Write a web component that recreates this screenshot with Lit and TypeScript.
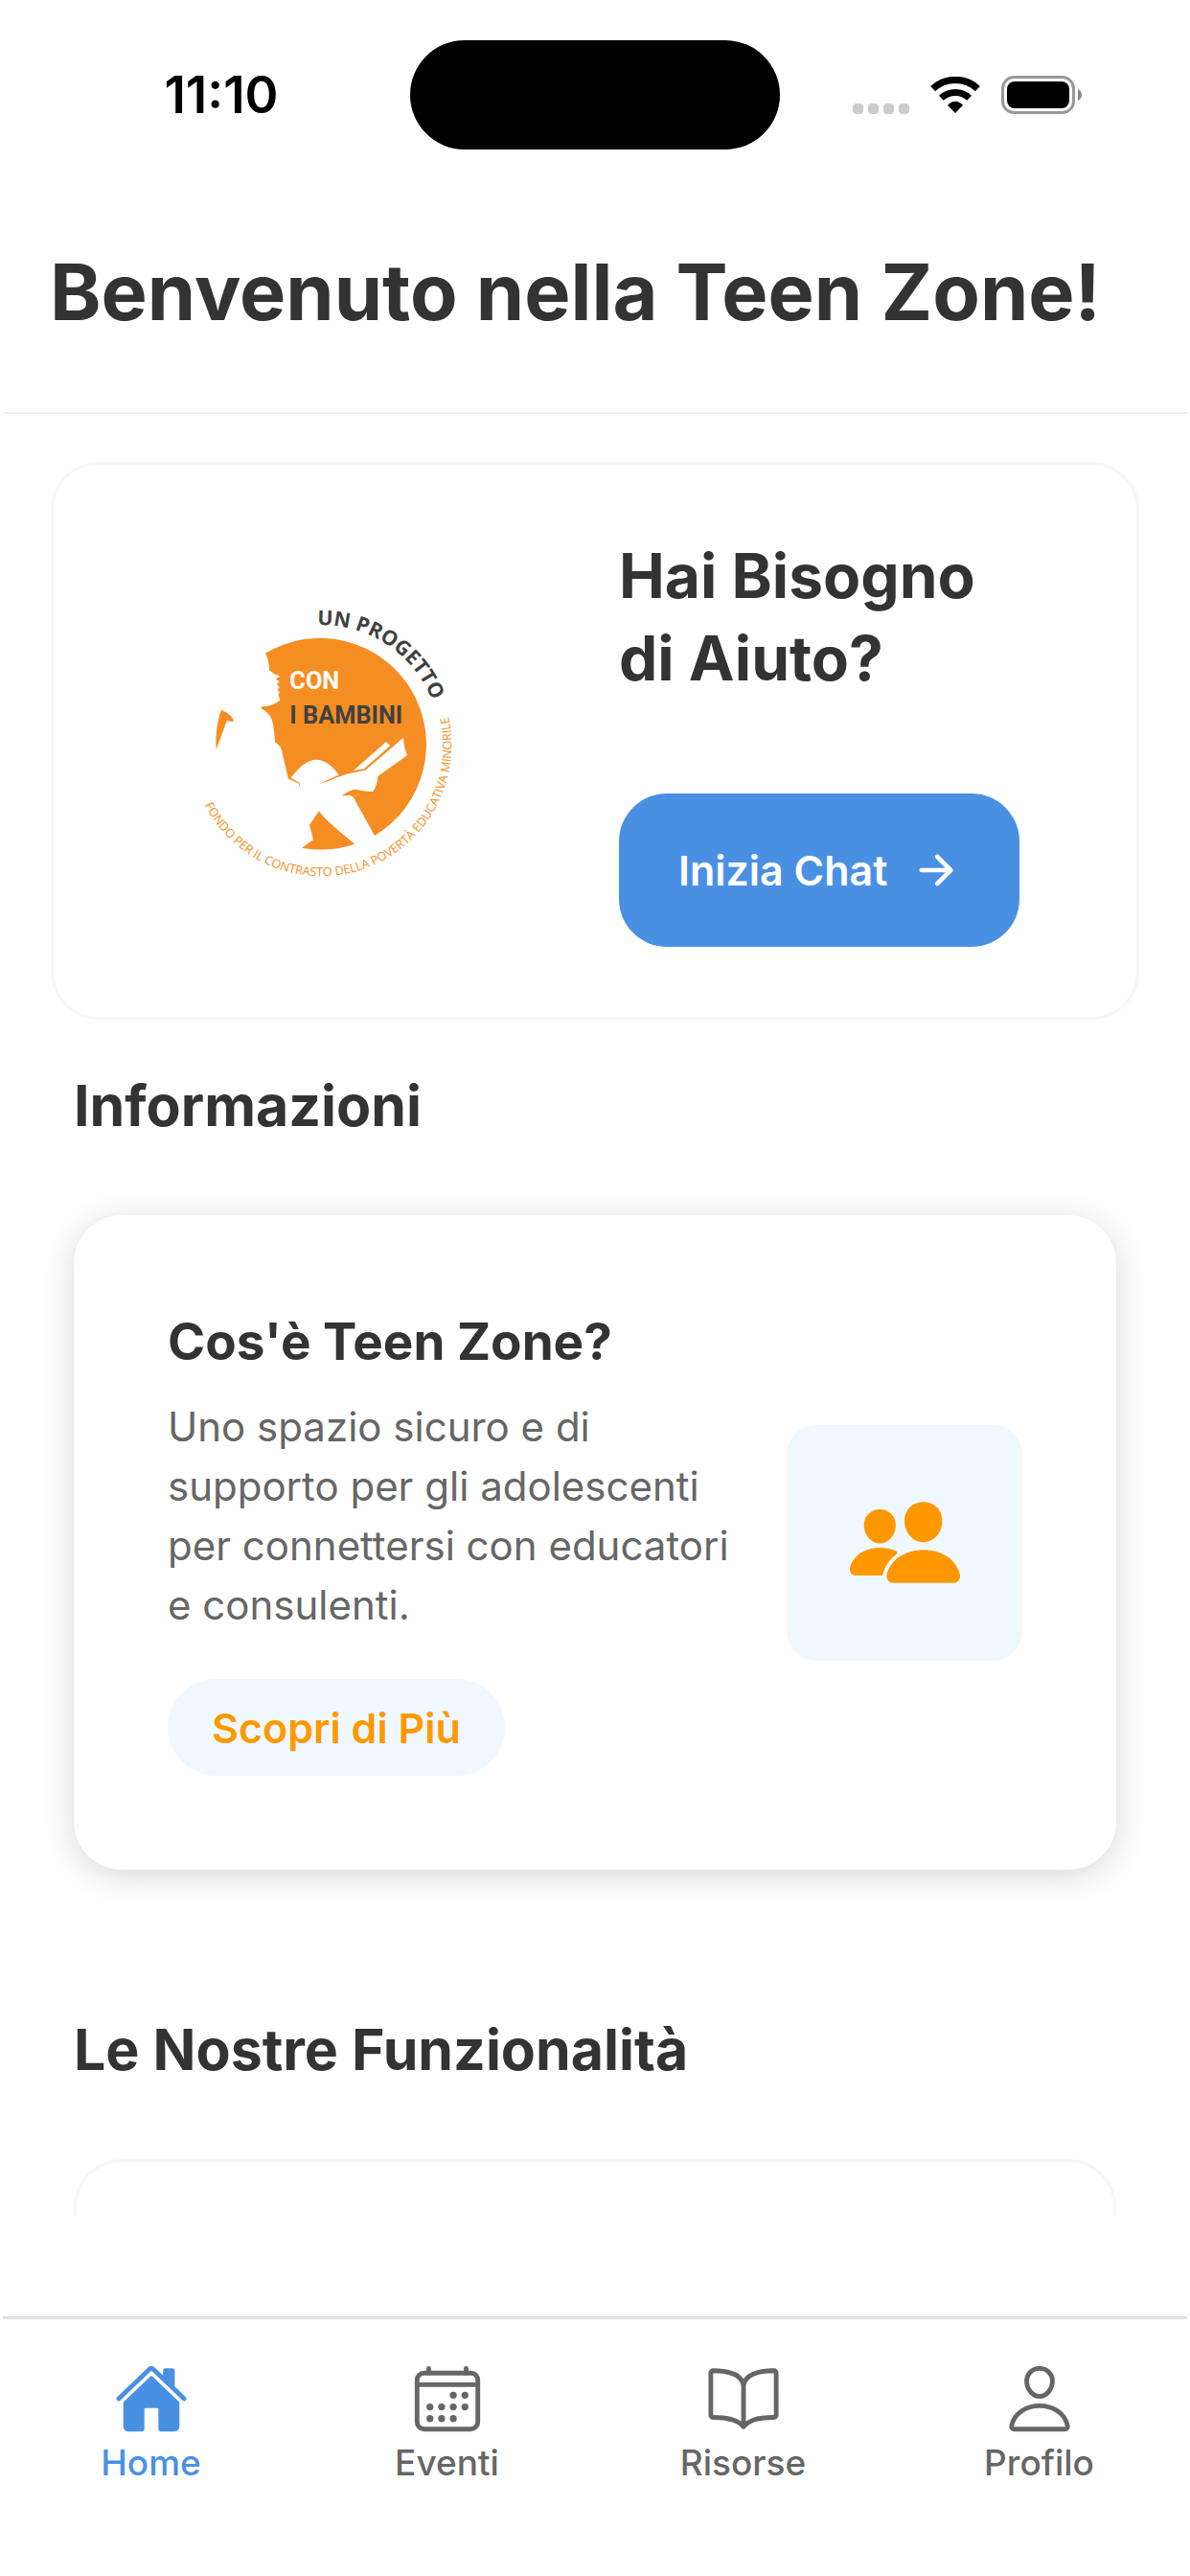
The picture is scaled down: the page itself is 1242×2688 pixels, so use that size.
import { LitElement, html, css, svg } from "lit";
import { customElement, property, state } from "lit/decorators.js";

type IconName = "home" | "calendar" | "book" | "person" | "people" | "arrow";

const icons = {
  home: svg`
    <path d="M261.56 101.28a8 8 0 00-11.06 0L66.4 277.15a8 8 0 00-2.47 5.79L63.9 448a32 32 0 0032 32H192a16 16 0 0016-16V328a8 8 0 018-8h80a8 8 0 018 8v136a16 16 0 0016 16h96.06a32 32 0 0032-32V282.94a8 8 0 00-2.47-5.79z"/>
    <path d="M490.91 244.15l-74.8-71.56V64a16 16 0 00-16-16h-48a16 16 0 00-16 16v32l-57.92-55.38C272.77 35.14 264.71 32 256 32c-8.68 0-16.72 3.14-22.14 8.63L21.16 244.13c-6.22 6-7 15.87-1.34 22.37A16 16 0 0043 267.56L250.5 69.28a8 8 0 0111.06 0l207.52 198.28a16 16 0 0022.59-.44c6.14-6.36 5.63-16.86-.76-22.97z"/>`,
  calendar: svg`
    <g fill="none" stroke="currentColor" stroke-width="32" stroke-linejoin="round">
      <rect x="48" y="80" width="416" height="384" rx="48"/>
      <path stroke-linecap="round" d="M128 48v32M384 48v32"/>
      <path d="M464 160H48"/>
    </g>
    <circle cx="296" cy="232" r="24"/><circle cx="376" cy="232" r="24"/>
    <circle cx="136" cy="312" r="24"/><circle cx="216" cy="312" r="24"/>
    <circle cx="296" cy="312" r="24"/><circle cx="376" cy="312" r="24"/>
    <circle cx="136" cy="392" r="24"/><circle cx="216" cy="392" r="24"/>
    <circle cx="296" cy="392" r="24"/>`,
  book: svg`
    <path fill="none" stroke="currentColor" stroke-width="32" stroke-linecap="round" stroke-linejoin="round"
      d="M256 160c16-63.16 76.43-95.41 208-96a15.94 15.94 0 0116 16v288a16 16 0 01-16 16c-128 0-177.45 25.81-208 64-30.37-38-80-64-208-64-9.88 0-16-8.05-16-17.93V80a15.94 15.94 0 0116-16c131.57.59 192 32.84 208 96zM256 160v288"/>`,
  person: svg`
    <path fill="none" stroke="currentColor" stroke-width="32" stroke-linecap="round" stroke-linejoin="round"
      d="M344 144c-3.92 52.87-44 96-88 96s-84.15-43.12-88-96c-4-55 35-96 88-96s92 42 88 96zM256 304c-87 0-175.3 48-191.64 138.6C62.39 453.52 68.57 464 80 464h352c11.44 0 17.62-10.48 15.65-21.4C431.3 352 343 304 256 304z"/>`,
  people: svg`
    <path d="M336 256c-20.56 0-40.44-9.18-56-25.84-15.13-16.25-24.37-37.92-26-61-1.74-24.62 5.77-47.26 21.14-63.76S312 80 336 80c23.83 0 45.38 9.06 60.7 25.52 15.47 16.62 23 39.22 21.26 63.63-1.67 23.11-10.9 44.77-26 61C376.44 246.82 356.57 256 336 256zM467.83 432H204.18a27.71 27.71 0 01-22-10.67 30.22 30.22 0 01-5.26-25.79c8.42-33.81 29.28-61.85 60.32-81.08C264.79 297.4 299.86 288 336 288c36.85 0 71 9 98.71 26.05 31.11 19.13 52 47.33 60.38 81.55a30.27 30.27 0 01-5.32 25.78A27.68 27.68 0 01467.83 432zM147 260c-35.19 0-66.13-32.72-69-72.93-1.42-20.6 5-39.65 18-53.62 12.86-13.83 31-21.45 51-21.45s38 7.66 50.93 21.57c13.1 14.08 19.5 33.09 18 53.52-2.87 40.2-33.8 72.91-68.93 72.91zM212.66 291.45c-17.59-8.6-40.42-12.9-65.65-12.9-29.46 0-58.07 7.68-80.57 21.62-25.51 15.83-42.67 38.88-49.6 66.71a27.39 27.39 0 004.79 23.36A25.32 25.32 0 0041.72 400h111a8 8 0 007.87-6.57c.11-.63.25-1.26.41-1.88 8.48-34.06 28.35-62.84 57.71-83.82a8 8 0 00-.63-13.39c-1.57-.92-3.37-1.89-5.42-2.89z"/>`,
  arrow: svg`
    <path fill="none" stroke="currentColor" stroke-width="48" stroke-linecap="round" stroke-linejoin="round"
      d="M268 112l144 144-144 144M392 256H100"/>`,
};

@customElement("app-icon")
export class AppIcon extends LitElement {
  @property() name: IconName = "home";

  static styles = css`
    :host {
      display: block;
    }
    .icon {
      display: block;
      width: 100%;
      height: 100%;
      fill: currentColor;
    }
  `;

  render() {
    return html`<svg class="icon" viewBox="0 0 512 512" aria-hidden="true">${icons[this.name]}</svg>`;
  }
}

@customElement("status-bar")
export class StatusBar extends LitElement {
  static styles = css`
    :host {
      display: grid;
      grid-template-columns: 1fr 386px 1fr;
      align-items: center;
      padding-top: 42px;
      color: #000;
    }
    .time {
      padding-left: 34px;
      text-align: center;
      font-size: 53px;
      line-height: 60px;
      font-weight: 600;
    }
    .island {
      height: 114px;
      border-radius: 57px;
      background: #000;
    }
    .signals {
      display: flex;
      align-items: center;
      gap: 22px;
      padding-left: 76px;
    }
    .dots {
      display: flex;
      align-self: flex-end;
      gap: 5px;
    }
    .dot {
      width: 11px;
      height: 11px;
      border-radius: 4px;
      background: #ccc;
    }
    .wifi {
      width: 52px;
      height: 38px;
    }
    .battery {
      width: 84px;
      height: 40px;
    }
  `;

  render() {
    return html`
      <div class="time">11:10</div>
      <div class="island"></div>
      <div class="signals">
        <div class="dots">
          <span class="dot"></span><span class="dot"></span><span class="dot"></span><span class="dot"></span>
        </div>
        <svg class="wifi" viewBox="0 0 156 114" aria-label="Wi-Fi">
          <path fill="none" stroke="#000" stroke-width="22" d="M8 38A102 102 0 0 1 148 38"/>
          <path fill="none" stroke="#000" stroke-width="21" d="M34 67A64 64 0 0 1 122 67"/>
          <path d="M78 114L54 89Q78 66 102 89Z"/>
        </svg>
        <svg class="battery" viewBox="0 0 84 40" aria-label="Batteria">
          <rect x="1.5" y="1.5" width="74" height="37" rx="12" fill="none" stroke="#999" stroke-width="3"/>
          <rect x="6" y="6" width="65" height="28" rx="8"/>
          <path d="M80 14Q84 16 84 20T80 26Z" fill="#888"/>
        </svg>
      </div>
    `;
  }
}

@customElement("project-logo")
export class ProjectLogo extends LitElement {
  static styles = css`
    :host {
      display: block;
    }
    .logo {
      display: block;
      width: 100%;
      height: auto;
    }
    .orange {
      fill: #f58e22;
    }
    .paper {
      fill: #fefefe;
    }
    .name {
      font-family: Roboto, sans-serif;
      font-size: 76px;
      font-weight: 700;
    }
    .dark {
      fill: #404040;
    }
    .top {
      font-family: "Open Sans", sans-serif;
      font-size: 64px;
      font-weight: 700;
      fill: #404040;
    }
    .ring {
      font-family: "Open Sans", sans-serif;
      font-size: 38px;
      font-weight: 500;
      fill: #f58e22;
    }
  `;

  render() {
    return html`
      <svg class="logo" viewBox="-4 -6 960 990" role="img" aria-label="Con i Bambini">
        <defs>
          <path id="upper" d="M453 127A369 369 0 0 1 814 622"/>
          <path id="lower" d="M100 690A409 409 0 0 0 832 325"/>
        </defs>
        <path class="orange" d="M290 215A332 332 0 0 1 632 786L566 667L583 652L528 662L430 634L398 634L394 622L362 608L340 515Q336 504 320 493Q316 420 302 408Q292 394 278 389V382Q310 382 336 362L330 342L335 338L328 330L334 321L326 313L334 304L323 296Q326 290 336 289Q330 280 320 281L302 268Q302 238 290 215Z"/>
        <path class="paper" d="M370 605Q410 549 450 548Q488 549 520 596L482 613L440 636H398L397 620Z"/>
        <path class="paper" d="M566 582L668 492L681 504L599 577Z"/>
        <path class="paper" d="M400 633H430L482 617Q512 603 550 592L603 581L722 479Q724 512 734 535L642 600Q640 632 626 648Q600 650 572 641Q552 644 528 662L583 652L566 667L430 700Z"/>
        <path class="orange" d="M583 652L566 667L558 660Q542 658 528 663Q552 645 572 642Q602 650 626 648L600 660Z"/>
        <path class="orange" d="M458 709Q476 738 570 812A332 332 0 0 1 404 824L440 799L428 752Z"/>
        <path class="orange" d="M152 392Q178 404 186 416Q194 428 186 430Q178 426 169 427L136 516Q132 445 152 392Z"/>
        <text class="name paper" x="366" y="327">CON</text>
        <text class="name dark" x="366" y="434">I BAMBINI</text>
        <text class="top"><textPath href="#upper">UN PROGETTO</textPath></text>
        <text class="ring"><textPath href="#lower">FONDO PER IL CONTRASTO DELLA POVERTÀ EDUCATIVA MINORILE</textPath></text>
      </svg>
    `;
  }
}

interface Tab {
  label: string;
  icon: IconName;
}

@customElement("app-root")
export class AppRoot extends LitElement {
  @state() private active = 0;

  private tabs: Tab[] = [
    { label: "Home", icon: "home" },
    { label: "Eventi", icon: "calendar" },
    { label: "Risorse", icon: "book" },
    { label: "Profilo", icon: "person" },
  ];

  static styles = css`
    :host {
      display: flex;
      flex-direction: column;
      height: 100vh;
      background: #fefefe;
      color: #333;
      font-family: Inter, "Liberation Sans", sans-serif;
    }
    * {
      box-sizing: border-box;
    }
    h1,
    h2,
    h3,
    p {
      margin: 0;
    }
    button {
      border: 0;
      font-family: inherit;
      cursor: pointer;
    }
    .header {
      margin: 0 3px;
      padding: 99px 49px 75px;
      border-bottom: 2px solid #eee;
    }
    .title {
      font-size: 81px;
      line-height: 100px;
      font-weight: 700;
    }
    .content {
      flex: 1;
      min-height: 0;
      margin-bottom: 105px;
      overflow-y: auto;
      scrollbar-width: none;
    }
    .outlined {
      border: 3px solid #f7f7f7;
      border-radius: 50px;
    }
    .help {
      display: grid;
      grid-template-columns: 1fr 1fr;
      align-items: center;
      margin: 50px 53px 0;
      padding: 73px 0;
    }
    .logo {
      width: 320px;
      justify-self: center;
    }
    .help-text {
      display: flex;
      flex-direction: column;
      align-items: flex-start;
      gap: 98px;
      padding-left: 25px;
    }
    .help-title {
      max-width: 420px;
      font-size: 64px;
      line-height: 86px;
      font-weight: 700;
    }
    .chat {
      display: flex;
      align-items: center;
      gap: 26px;
      height: 160px;
      padding: 0 62px;
      border-radius: 50px;
      background: #4a90e2;
      color: #fff;
      font-size: 43px;
      line-height: 52px;
      font-weight: 600;
    }
    .arrow {
      width: 50px;
      height: 50px;
    }
    .section {
      margin: 54px 77px 0;
    }
    .section + .section {
      margin-top: 152px;
    }
    .section-title {
      margin-bottom: 78px;
      font-size: 59px;
      line-height: 72px;
      font-weight: 700;
    }
    .info {
      display: flex;
      align-items: center;
      gap: 40px;
      padding: 98px;
      border-radius: 50px;
      background: #fefefe;
      box-shadow: 0 6px 32px rgba(0, 0, 0, 0.15);
    }
    .info-text {
      flex: 1;
      display: flex;
      flex-direction: column;
      align-items: flex-start;
    }
    .info-title {
      margin-bottom: 24px;
      font-size: 53px;
      line-height: 68px;
      font-weight: 700;
    }
    .info-body {
      margin-bottom: 46px;
      color: #666;
      font-size: 42px;
      line-height: 62px;
    }
    .more {
      height: 101px;
      padding: 0 46px;
      border-radius: 51px;
      background: #f0f8ff;
      color: #ff9800;
      font-size: 43px;
      line-height: 52px;
      font-weight: 600;
    }
    .badge {
      display: flex;
      align-items: center;
      justify-content: center;
      width: 246px;
      height: 246px;
      border-radius: 31px;
      background: #f0f8ff;
      color: #ff9800;
    }
    .people {
      width: 123px;
      height: 123px;
    }
    .feature {
      min-height: 420px;
    }
    .tabs {
      display: grid;
      grid-template-columns: repeat(4, 1fr);
      margin: 0 3px;
      padding: 44px 0 96px;
      border-top: 3px solid #e0e0e0;
    }
    .tab {
      display: flex;
      flex-direction: column;
      align-items: center;
      gap: 5px;
      padding: 0;
      background: none;
      color: #666;
      font-size: 37px;
      line-height: 45px;
      font-weight: 500;
    }
    .tab[aria-current="page"] {
      color: #4a90e2;
    }
    .tab-icon {
      width: 78px;
      height: 78px;
    }
  `;

  render() {
    return html`
      <status-bar></status-bar>
      <header class="header"><h1 class="title">Benvenuto nella Teen Zone!</h1></header>
      <main class="content">
        <section class="help outlined">
          <project-logo class="logo"></project-logo>
          <div class="help-text">
            <h2 class="help-title">Hai Bisogno di Aiuto?</h2>
            <button class="chat">Inizia Chat <app-icon class="arrow" name="arrow"></app-icon></button>
          </div>
        </section>
        <section class="section">
          <h2 class="section-title">Informazioni</h2>
          <article class="info">
            <div class="info-text">
              <h3 class="info-title">Cos'è Teen Zone?</h3>
              <p class="info-body">
                Uno spazio sicuro e di supporto per gli adolescenti per connettersi con educatori e consulenti.
              </p>
              <button class="more">Scopri di Più</button>
            </div>
            <div class="badge"><app-icon class="people" name="people"></app-icon></div>
          </article>
        </section>
        <section class="section">
          <h2 class="section-title">Le Nostre Funzionalità</h2>
          <article class="feature outlined"></article>
        </section>
      </main>
      <nav class="tabs">
        ${this.tabs.map(
          (tab, i) => html`
            <button
              class="tab"
              aria-current=${i === this.active ? "page" : "false"}
              @click=${() => (this.active = i)}
            >
              <app-icon class="tab-icon" .name=${tab.icon}></app-icon>
              ${tab.label}
            </button>
          `,
        )}
      </nav>
    `;
  }
}
